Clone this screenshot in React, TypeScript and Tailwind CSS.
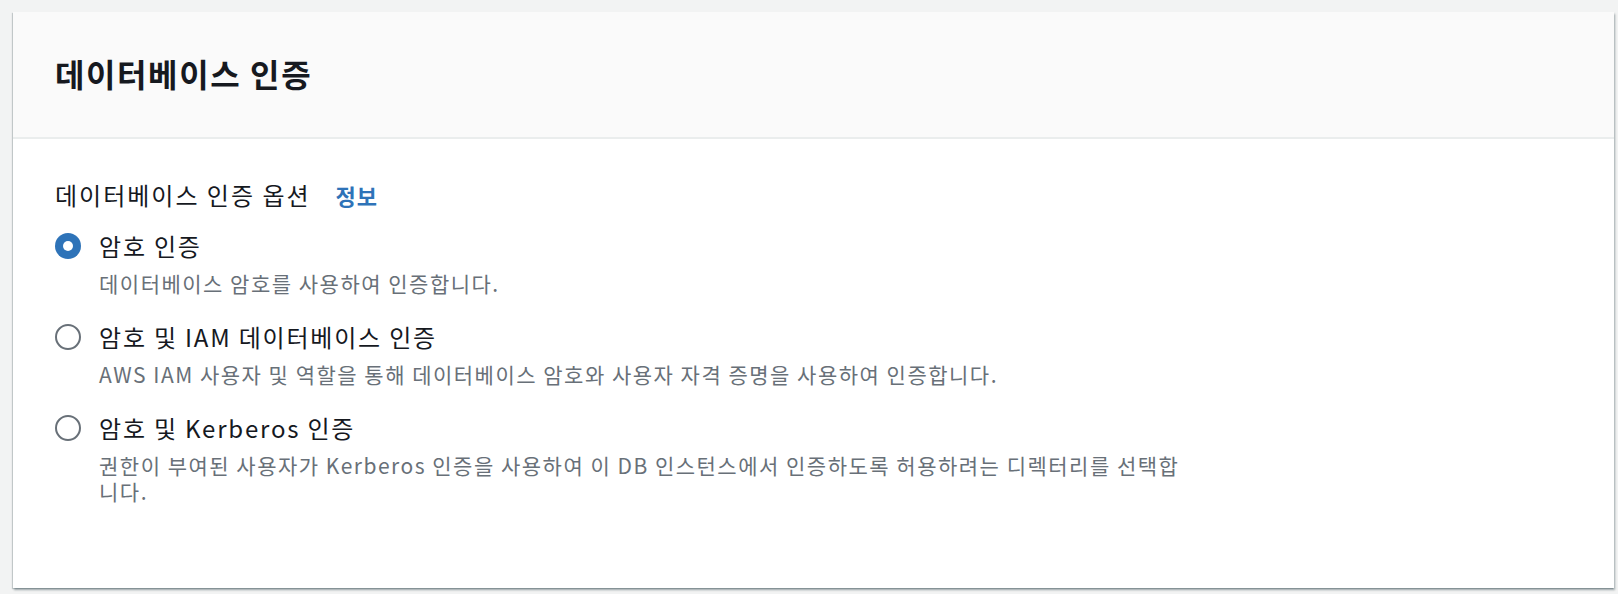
import { useState } from "react";

const options = [
  {
    id: "password",
    label: "암호 인증",
    description: "데이터베이스 암호를 사용하여 인증합니다.",
  },
  {
    id: "iam",
    label: "암호 및 IAM 데이터베이스 인증",
    description: "AWS IAM 사용자 및 역할을 통해 데이터베이스 암호와 사용자 자격 증명을 사용하여 인증합니다.",
  },
  {
    id: "kerberos",
    label: "암호 및 Kerberos 인증",
    description:
      "권한이 부여된 사용자가 Kerberos 인증을 사용하여 이 DB 인스턴스에서 인증하도록 허용하려는 디렉터리를 선택합니다.",
  },
];

export default function App() {
  const [selected, setSelected] = useState("password");

  return (
    <div className="min-h-screen bg-[#f2f3f3] pt-[12px] pl-[13px] pr-[4px] pb-[6px] font-['Noto_Sans_CJK_KR','Noto_Sans',sans-serif] text-[#16191f]">
      <section className="h-[576px] bg-white shadow-[1px_2px_2px_0_rgba(0,28,36,0.35),-1px_1px_1px_0_rgba(0,28,36,0.18)]">
        <header className="flex h-[127px] items-center border-b-2 border-[#eaeded] bg-[#fafafa] px-[42px] pb-[4px]">
          <h2 className="text-[32px] leading-[40px] font-bold tracking-[1.6px]">데이터베이스 인증</h2>
        </header>

        <div className="px-[42px] pt-[41px]">
          <div className="flex items-center">
            <span className="text-[24px] leading-[30px] tracking-[2px]">데이터베이스 인증 옵션</span>
            <a href="#" className="ml-[25px] text-[22px] leading-[30px] font-bold tracking-[1px] text-[#2e73b8]">
              정보
            </a>
          </div>

          <div className="mt-[19px] flex flex-col gap-6">
            {options.map((o) => {
              const on = selected === o.id;
              return (
                <label key={o.id} className="flex cursor-pointer flex-col" onClick={() => setSelected(o.id)}>
                  <div className="flex items-center">
                    {on ? (
                      <span className="flex h-[26px] w-[26px] items-center justify-center rounded-full bg-[#2e73b8]">
                        <span className="h-[10px] w-[10px] rounded-full bg-white" />
                      </span>
                    ) : (
                      <span className="h-[26px] w-[26px] rounded-full border-2 border-[#687078] bg-white" />
                    )}
                    <span className="ml-[18px] text-[24px] leading-[34px] tracking-[1.8px]">{o.label}</span>
                  </div>
                  <p className="mt-[7px] ml-[44px] max-w-[1090px] text-[21px] leading-[26px] tracking-[1.5px] text-[#687078]">
                    {o.description}
                  </p>
                </label>
              );
            })}
          </div>
        </div>
      </section>
    </div>
  );
}
